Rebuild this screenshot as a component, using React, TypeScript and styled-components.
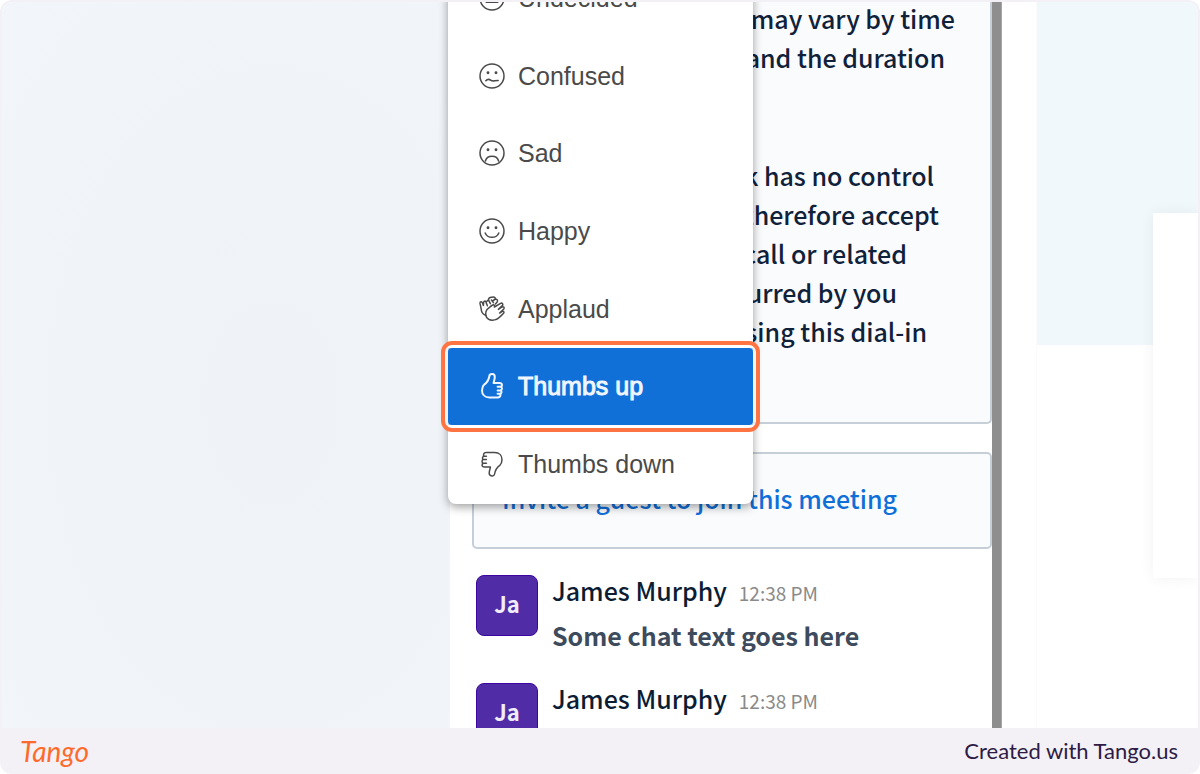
import React from "react";
import styled, { createGlobalStyle, css } from "styled-components";

const chatFont = `"Noto Sans CJK SC", "Noto Sans", sans-serif`;

const GlobalStyle = createGlobalStyle`
  *, *::before, *::after { box-sizing: border-box; }
  body { margin: 0; background: #fff; font-family: ${chatFont}; }
  p { margin: 0; }
`;

const Frame = styled.div`
  display: flex;
  flex-direction: column;
  height: 100vh;
  padding: 2px 2px 0;
  background: #f3f1f6;
  border-radius: 12px;
  overflow: hidden;
`;

const Shot = styled.main`
  display: flex;
  flex: 1;
  min-height: 0;
  background: #fff;
  border-radius: 10px 10px 0 0;
  overflow: hidden;
`;

const LeftPane = styled.div`
  flex: 1;
  background: radial-gradient(ellipse at 60% 55%, #eff3f7 0%, #f0f4f8 50%, #f2f5fa 100%);
`;

const ChatPane = styled.section`
  position: relative;
  flex: 0 0 586px;
  display: flex;
`;

const Feed = styled.div`
  flex: 1;
  min-width: 0;
  padding-left: 22px;
`;

const Scrollbar = styled.div`
  flex: 0 0 10px;
  margin-right: 34px;
  background: #8e8e8e;
  border-right: 1px solid #a6a6a6;
`;

const Card = styled.div<{ $continued?: boolean }>`
  padding: 24px 28px 28px;
  background: #fafbfd;
  border: 2px solid #c6ced8;
  border-radius: 5px;
  ${(p) =>
    p.$continued &&
    css`
      height: 422px;
      padding-top: 0;
      border-top: 0;
      border-top-left-radius: 0;
      border-top-right-radius: 0;
    `}
  & + & { margin-top: 28px; }
`;

const Paragraph = styled.p`
  color: #10213a;
  font-size: 25px;
  font-weight: 500;
  line-height: 33px;
  & + & { margin-top: 79px; }
`;

const Line = styled.span<{ $measure: number }>`
  display: block;
  width: ${(p) => p.$measure}px;
  padding-bottom: 6px;
  text-align: right;
  white-space: nowrap;
`;

const InviteLink = styled.a`
  display: block;
  color: #0f6fd9;
  font-size: 25px;
  font-weight: 500;
  line-height: 41px;
  text-decoration: none;
  white-space: nowrap;
`;

const Messages = styled.div`
  display: flex;
  flex-direction: column;
  padding: 26px 0 0 4px;
`;

const Message = styled.article`
  display: flex;
  gap: 14px;
  height: 108px;
`;

const Avatar = styled.div`
  display: flex;
  align-items: center;
  justify-content: center;
  flex: 0 0 62px;
  height: 61px;
  padding-bottom: 6px;
  color: #f1ecfb;
  background: #502ca6;
  border: 1px solid #3c06a0;
  border-radius: 8px;
  font-size: 22px;
  font-weight: 700;
`;

const MessageHead = styled.div`
  display: flex;
  align-items: baseline;
  gap: 12px;
  line-height: 30px;
`;

const Author = styled.span`
  color: #0c1c33;
  font-size: 25px;
  font-weight: 500;
`;

const Time = styled.time`
  color: #8a8a8a;
  font-size: 19px;
`;

const MessageText = styled.p`
  margin-top: 9px;
  color: #3d4b5c;
  font-size: 25px;
  font-weight: 700;
  line-height: 36px;
`;

const Menu = styled.div`
  position: absolute;
  top: -43px;
  left: -2px;
  display: grid;
  grid-auto-rows: 1fr;
  width: 305px;
  height: 545px;
  padding-bottom: 1px;
  background: #fff;
  border-radius: 8px;
  box-shadow: 0 3px 10px rgba(0, 0, 0, 0.38);
`;

const MenuItem = styled.button<{ $active?: boolean }>`
  position: relative;
  display: flex;
  align-items: center;
  gap: 12px;
  padding: 0 30px;
  border: 0;
  background: transparent;
  color: #4a4a4a;
  font-family: "Liberation Sans", Arial, sans-serif;
  font-size: 25px;
  line-height: 30px;
  text-align: left;

  ${(p) =>
    p.$active &&
    css`
      background: #1070d8;
      color: #f0f6ff;
      -webkit-text-stroke: 1px #f0f6ff;

      &::after {
        content: "";
        position: absolute;
        inset: -7px;
        border: 4px solid #ff7442;
        border-radius: 11px;
        box-shadow: inset 0 0 0 3px rgba(255, 255, 255, 0.75);
      }
    `}
`;

const Glyph = styled.svg<{ $strong?: boolean }>`
  flex: none;
  width: 28px;
  height: 28px;
  fill: none;
  stroke: currentColor;
  stroke-width: ${(p) => (p.$strong ? 2 : 1.5)};
  stroke-linecap: round;
  stroke-linejoin: round;
`;

const RightPane = styled.aside`
  position: relative;
  flex: 0 1 162px;
  border-left: 1px solid #fbfbfb;
`;

const Banner = styled.div`
  height: 343px;
  background: #f0f8fc;
`;

const SideCard = styled.div`
  position: absolute;
  top: 211px;
  right: 0;
  width: 45px;
  height: 365px;
  background: #fff;
  box-shadow: 0 0 16px rgba(0, 0, 0, 0.06);
`;

const Footer = styled.footer`
  display: flex;
  align-items: center;
  justify-content: space-between;
  flex: 0 0 46px;
  padding: 0 20px 0 18px;
  font-family: Lato, sans-serif;
`;

const Brand = styled.a`
  color: #ff6a2b;
  font-size: 28px;
  font-style: italic;
  font-weight: 400;
  line-height: 44px;
  text-decoration: none;
`;

const Credit = styled.span`
  color: #2d1b45;
  font-size: 22px;
  line-height: 44px;
`;

const Face = ({ children }: { children: React.ReactNode }) => (
  <Glyph viewBox="0 0 28 28" aria-hidden="true">
    <circle cx="14" cy="14" r="12" />
    <circle cx="10" cy="10.8" r="0.7" fill="currentColor" />
    <circle cx="18" cy="10.8" r="0.7" fill="currentColor" />
    {children}
  </Glyph>
);

const thumb =
  "M6.2 12.6 C9 10.6 10.8 7.6 11.4 4 C11.8 1.4 16.8 1.2 16.8 5 C16.8 7.2 15.8 9 15.6 11 H21.6 C24.6 11 24.6 14.4 22.4 14.8 C24.6 15.2 24.4 18 22.4 18.4 C24.2 18.8 23.8 21.5 22 21.8 C23.2 23 22.2 25.4 20 25.4 H11.4 C6.8 25.4 4 22.4 4 18.4 C4 16 4.8 13.8 6.2 12.6 Z M19.6 14.8 H22.4 M19.6 18.4 H22.4 M19.6 21.8 H22";

const reactions = [
  { label: "Undecided", icon: <Face><path d="M8.5 18 H19.5" strokeWidth="2.2" /></Face> },
  { label: "Confused", icon: <Face><path d="M7.8 18.8 C9.5 16.8 11 16.8 13 18.4 C15 20 16.2 18.4 20.2 18.4" /></Face> },
  { label: "Sad", icon: <Face><path d="M7.4 22 C9 15.6 19 15.6 20.6 22" /></Face> },
  { label: "Happy", icon: <Face><path d="M7.2 16 C9.5 21.8 18.5 21.8 20.8 16" /></Face> },
  {
    label: "Applaud",
    icon: (
      <Glyph viewBox="0 0 28 28" aria-hidden="true">
        <path d="M8 16.4 C6.8 20.6 8.8 25 14 25.2 C18.4 25.4 20.4 23.6 22.2 21.6 L25.6 18.2 C26.6 16.8 25.4 15.8 24 16.6 L21.6 18 L25.8 14 C26.8 12.4 25.4 11.2 24 12 L20.4 14.4 L24.6 10.4 C25.4 8.8 24 7.6 22.6 8.4 L16.4 12 C16.8 9.8 15.6 9 14 10.4 C12 12.2 9 13.4 8 16.4 Z" />
        <path d="M7.6 20.4 C4.6 19.2 3.2 17 3.2 13.8 L2 8.4 C1.8 6.4 3.8 6.2 4.4 7.8 L5.4 10.4 L5.6 7.4 C6 5.6 7.8 5.8 8 7.2 L10.4 4.8 C10.8 2.6 12.4 2 14 2.2 C15.6 1.6 17.4 2.4 17.6 4 C19.4 4.2 20 5.6 19.2 7 L17.4 9 M8 7.2 L9.4 10.8 M10.4 4.8 L12.4 8.6 M13.4 5 L15.4 7.6 M17.6 4 L14.4 6" />
      </Glyph>
    ),
  },
  {
    label: "Thumbs up",
    active: true,
    icon: (
      <Glyph viewBox="0 0 28 28" aria-hidden="true" $strong>
        <path d={thumb} />
      </Glyph>
    ),
  },
  {
    label: "Thumbs down",
    icon: (
      <Glyph viewBox="0 0 28 28" aria-hidden="true">
        <path d={thumb} transform="rotate(180 14 14)" />
      </Glyph>
    ),
  },
];

const notice: { text: string; measure: number }[][] = [
  [
    { text: "may vary by time", measure: 453 },
    { text: "and the duration", measure: 443 },
  ],
  [
    { text: "k has no control", measure: 432 },
    { text: "therefore accept", measure: 437 },
    { text: "call or related", measure: 405 },
    { text: "incurred by you", measure: 395 },
    { text: "using this dial-in", measure: 425 },
  ],
];

const messages = [
  { author: "James Murphy", time: "12:38 PM", text: "Some chat text goes here" },
  { author: "James Murphy", time: "12:38 PM", text: "" },
];

export default function App() {
  return (
    <>
      <GlobalStyle />
      <Frame>
        <Shot>
          <LeftPane />
          <ChatPane>
            <Feed>
              <Card $continued>
                {notice.map((lines, i) => (
                  <Paragraph key={i}>
                    {lines.map((line) => (
                      <Line key={line.text} $measure={line.measure}>
                        {line.text}
                      </Line>
                    ))}
                  </Paragraph>
                ))}
              </Card>
              <Card>
                <InviteLink href="#invite">Invite a guest to join this meeting</InviteLink>
              </Card>
              <Messages>
                {messages.map((m, i) => (
                  <Message key={i}>
                    <Avatar>Ja</Avatar>
                    <div>
                      <MessageHead>
                        <Author>{m.author}</Author>
                        <Time>{m.time}</Time>
                      </MessageHead>
                      {m.text && <MessageText>{m.text}</MessageText>}
                    </div>
                  </Message>
                ))}
              </Messages>
            </Feed>
            <Scrollbar />
            <Menu role="menu">
              {reactions.map((r) => (
                <MenuItem key={r.label} type="button" role="menuitem" $active={r.active}>
                  {r.icon}
                  {r.label}
                </MenuItem>
              ))}
            </Menu>
          </ChatPane>
          <RightPane>
            <Banner />
            <SideCard />
          </RightPane>
        </Shot>
        <Footer>
          <Brand href="#tango">Tango</Brand>
          <Credit>Created with Tango.us</Credit>
        </Footer>
      </Frame>
    </>
  );
}
